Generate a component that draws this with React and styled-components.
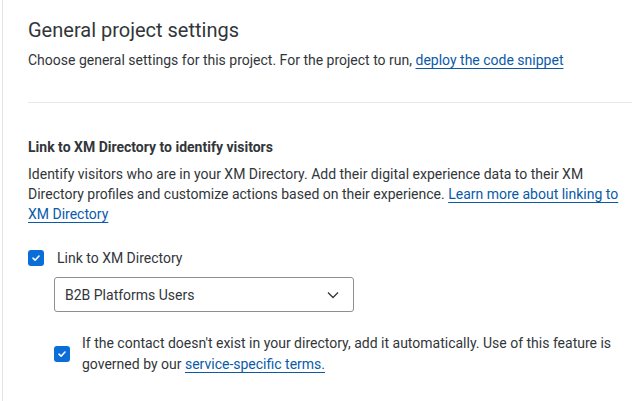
import React from 'react'
import styled, {createGlobalStyle} from 'styled-components'

const GlobalStyle = createGlobalStyle`
  html, body {
    margin: 0;
    padding: 0;
    background: #fff;
  }
  body {
    font-family: Roboto, "Liberation Sans", sans-serif;
    color: #32363a;
  }
`

function Checkbox() {
    return (
        <Box>
            <svg width="10" height="10" viewBox="0 0 10 10">
                <path d="M2 5.2 L4.1 7.2 L8 3" fill="none" stroke="#fff" strokeWidth="1.6"
                      strokeLinecap="round" strokeLinejoin="round"/>
            </svg>
        </Box>
    )
}

export default function App() {
    return (
        <>
            <GlobalStyle/>
            <Page>
                <Header>
                    <Title>General project settings</Title>
                    <Text>
                        Choose general settings for this project. For the project to run,{' '}
                        <Link href="#">deploy the code snippet</Link>
                    </Text>
                </Header>
                <Divider/>
                <Section>
                    <SectionTitle>Link to XM Directory to identify visitors</SectionTitle>
                    <Text>
                        Identify visitors who are in your XM Directory. Add their digital experience data to their XM
                        Directory profiles and customize actions based on their experience.{' '}
                        <Link href="#">Learn more about linking to XM Directory</Link>
                    </Text>
                    <CheckRow>
                        <Checkbox/>
                        <Label>Link to XM Directory</Label>
                    </CheckRow>
                    <Nested>
                        <Select>
                            <span>B2B Platforms Users</span>
                            <svg width="12" height="8" viewBox="0 0 12 8">
                                <path d="M1 1.5 L6 6.5 L11 1.5" fill="none" stroke="#32363a" strokeWidth="1.3"/>
                            </svg>
                        </Select>
                        <AutoRow>
                            <Checkbox/>
                            <AutoText>
                                If the contact doesn't exist in your directory, add it automatically. Use of this
                                feature is governed by our <Link href="#">service-specific terms.</Link>
                            </AutoText>
                        </AutoRow>
                    </Nested>
                </Section>
            </Page>
        </>
    )
}

const Page = styled.div`
  min-height: 401px;
  box-sizing: border-box;
  margin-left: 2px;
  border-left: 1px solid #e4e4e4;
  padding: 17px 12px 0 25px;
`

const Header = styled.div`
  display: flex;
  flex-direction: column;
  gap: 7px;
`

const Title = styled.h1`
  margin: 0;
  font-size: 20px;
  font-weight: 400;
  line-height: 26px;
  color: #32363a;
`

const Text = styled.p`
  margin: 0;
  font-size: 14px;
  line-height: 20px;
`

const AutoText = styled(Text)`
  line-height: 21px;
`

const Link = styled.a`
  color: #0a5aa8;
  text-decoration: underline;
  text-underline-offset: 3px;
`

const Divider = styled.hr`
  margin: 32px 0 0;
  border: none;
  border-top: 1px solid #e8e8e8;
`

const Section = styled.div`
  padding-top: 34px;
  display: flex;
  flex-direction: column;
`

const SectionTitle = styled.h2`
  margin: 0 0 7px;
  font-size: 14px;
  font-weight: 700;
  line-height: 20px;
`

const CheckRow = styled.div`
  display: flex;
  align-items: center;
  gap: 13px;
  margin-top: 26px;
`

const Box = styled.span`
  flex: none;
  width: 16px;
  height: 16px;
  border-radius: 3px;
  background: #0b6ed8;
  display: flex;
  align-items: center;
  justify-content: center;
`

const Label = styled.span`
  font-size: 14px;
`

const Nested = styled.div`
  padding-left: 26px;
  display: flex;
  flex-direction: column;
`

const Select = styled.div`
  margin-top: 11px;
  width: 300px;
  height: 35px;
  box-sizing: border-box;
  border: 1px solid #8f8f8f;
  border-radius: 3px;
  padding: 0 14px 0 10px;
  display: flex;
  align-items: center;
  justify-content: space-between;
  font-size: 14px;
`

const AutoRow = styled.div`
  margin-top: 21px;
  display: flex;
  align-items: center;
  gap: 12px;
  padding-right: 20px;
`
